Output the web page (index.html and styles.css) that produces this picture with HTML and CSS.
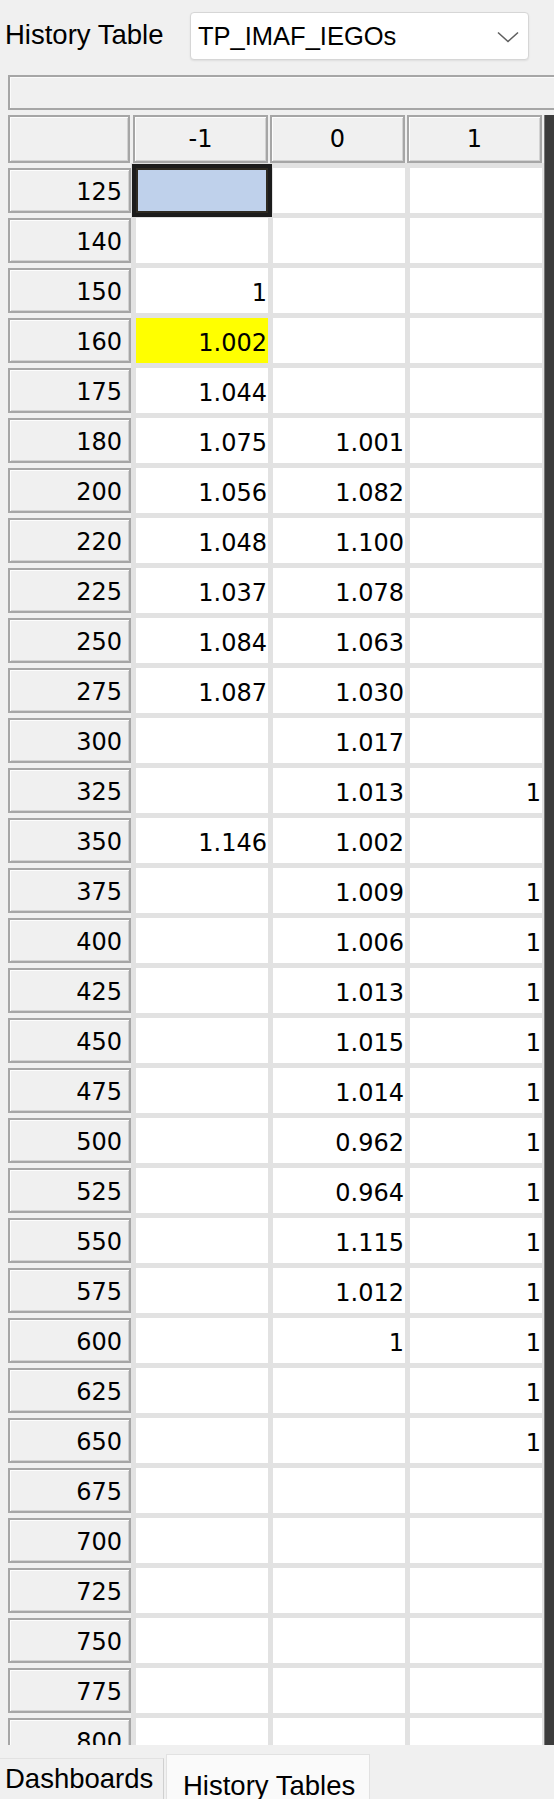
FILE: index.html
```html
<!DOCTYPE html>
<html lang="en">
<head>
    <meta charset="UTF-8">
    <meta name="viewport" content="width=device-width, initial-scale=1.0">
    <title>History Tables</title>
    <link rel="stylesheet" href="styles.css">
</head>
<body>
    <div class="toolbar">
        <span class="toolbar-label">History Table</span>
        <div class="combo">
            <span>TP_IMAF_IEGOs</span>
            <svg class="combo-arrow" width="22" height="12" viewBox="0 0 22 12">
                <polyline points="1,1.5 11,10.5 21,1.5" fill="none" stroke="#606060" stroke-width="1.6"/>
            </svg>
        </div>
    </div>

    <div class="grid-panel">
        <div class="grid-band"></div>
        <div class="grid-main">
            <div class="grid-table">
                <div class="grid-head">
                    <div class="corner"></div>
                    <div class="col-head">-1</div>
                    <div class="col-head">0</div>
                    <div class="col-head">1</div>
                </div>
                <div class="grid-body" id="grid-body"></div>
            </div>
            <div class="grid-scroll"></div>
        </div>
    </div>

    <div class="tabs">
        <div class="tab">Dashboards</div>
        <div class="tab tab-active">History Tables</div>
    </div>

    <script>
        const rows = [
            ['125', '', '', ''],
            ['140', '', '', ''],
            ['150', '1', '', ''],
            ['160', '1.002', '', ''],
            ['175', '1.044', '', ''],
            ['180', '1.075', '1.001', ''],
            ['200', '1.056', '1.082', ''],
            ['220', '1.048', '1.100', ''],
            ['225', '1.037', '1.078', ''],
            ['250', '1.084', '1.063', ''],
            ['275', '1.087', '1.030', ''],
            ['300', '', '1.017', ''],
            ['325', '', '1.013', '1'],
            ['350', '1.146', '1.002', ''],
            ['375', '', '1.009', '1'],
            ['400', '', '1.006', '1'],
            ['425', '', '1.013', '1'],
            ['450', '', '1.015', '1'],
            ['475', '', '1.014', '1'],
            ['500', '', '0.962', '1'],
            ['525', '', '0.964', '1'],
            ['550', '', '1.115', '1'],
            ['575', '', '1.012', '1'],
            ['600', '', '1', '1'],
            ['625', '', '', '1'],
            ['650', '', '', '1'],
            ['675', '', '', ''],
            ['700', '', '', ''],
            ['725', '', '', ''],
            ['750', '', '', ''],
            ['775', '', '', ''],
            ['800', '', '', '']
        ];

        function cellClass(rowIndex, colIndex) {
            if (rowIndex === 0 && colIndex === 0) return 'cell selected';
            if (rowIndex === 3 && colIndex === 0) return 'cell flagged';
            return 'cell';
        }

        document.getElementById('grid-body').innerHTML = rows.map((row, i) => `
            <div class="grid-row">
                <div class="row-head">${row[0]}</div>
                ${row.slice(1).map((value, j) => `<div class="${cellClass(i, j)}">${value}</div>`).join('')}
            </div>
        `).join('');
    </script>
</body>
</html>
```

FILE: styles.css
```css
body {
    margin: 0;
    width: 554px;
    height: 1799px;
    overflow: hidden;
    background-color: #f0f0f0;
    font-family: "Liberation Sans", Arial, sans-serif;
    color: #000;
}

/* top selector */
.toolbar {
    display: flex;
    align-items: center;
    height: 75px;
    padding: 12px 0 15px 5px;
    box-sizing: border-box;
}

.toolbar-label {
    flex: 0 0 185px;
    font-size: 27.5px;
    line-height: 30px;
    padding-bottom: 2px;
}

.combo {
    display: flex;
    align-items: center;
    justify-content: space-between;
    width: 339px;
    height: 48px;
    box-sizing: border-box;
    padding: 0 9px 0 7px;
    background: #fff;
    border: 1px solid #d6d6d6;
    border-radius: 4px;
    box-shadow: 0 1px 2px rgba(0, 0, 0, 0.08);
    font-size: 25.5px;
    line-height: 29px;
}

.combo-arrow {
    margin-top: 2px;
}

/* grid */
.grid-panel {
    margin-left: 8px;
    height: 1670px;
    overflow: hidden;
}

.grid-band {
    width: 560px;
    height: 35px;
    box-sizing: border-box;
    border: 2px solid #a6a6a6;
    border-right: none;
    box-shadow: inset 1px 1px 0 #fbfbfb;
    margin-bottom: 5px;
}

.grid-main {
    display: flex;
}

.grid-table {
    width: 537px;
    font-family: "DejaVu Sans", Verdana, sans-serif;
    font-size: 24px;
}

.grid-scroll {
    width: 9px;
    background: #3c3c3c;
    border-left: 1px solid #777;
}

.grid-head {
    display: flex;
    height: 48px;
}

.corner,
.col-head,
.row-head {
    box-sizing: border-box;
    background: #f0f0f0;
    border: 2px solid #a6a6a6;
    box-shadow: inset 1px 1px 0 #fdfdfd, inset -1px -1px 0 #d2d2d2;
}

.corner {
    width: 122px;
    margin-right: 1px;
}

.col-head {
    width: 135px;
    margin-left: 2px;
    text-align: center;
    line-height: 44px;
}

.grid-body {
    padding-top: 5px;
    background: linear-gradient(to right, #f0f0f0 123px, #e2e2e2 123px);
}

.grid-row {
    display: flex;
    height: 50px;
}

.row-head {
    width: 123px;
    height: 45px;
    padding: 4px 7px 0 0;
    text-align: right;
    line-height: 37px;
}

.cell {
    width: 132px;
    height: 45px;
    margin-left: 5px;
    box-sizing: border-box;
    padding: 6px 1px 0 0;
    background: #fff;
    text-align: right;
    line-height: 39px;
}

.cell.selected {
    position: relative;
    z-index: 1;
    background: #bfd1eb;
    outline: 4px solid #1c1c1c;
    box-shadow: inset 0 0 0 2px #2e2a22;
}

.cell.flagged {
    background: #ffff00;
}

/* bottom tabs */
.tabs {
    display: flex;
    align-items: flex-start;
    height: 54px;
    font-size: 27.5px;
}

.tab {
    width: 164px;
    height: 41px;
    margin-top: 13px;
    box-sizing: border-box;
    padding-left: 5px;
    border-top: 1px solid #e2e2e2;
    border-right: 1px solid #d0d0d0;
    line-height: 40px;
}

.tab-active {
    width: 204px;
    height: 45px;
    margin-top: 9px;
    margin-left: 2px;
    padding: 10px 0 0 16px;
    background: #fafafa;
    border: 1px solid #e2e2e2;
    border-bottom: none;
    line-height: 42px;
}
```
